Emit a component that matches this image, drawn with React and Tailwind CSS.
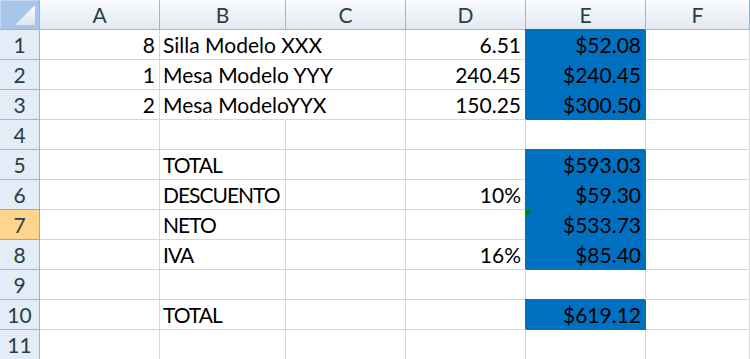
import React from "react";

const cols = ["A", "B", "C", "D", "E", "F"];

const rows = [
  { a: "8", b: "Silla Modelo XXX", d: "6.51", e: "$52.08", fill: true, spill: true },
  { a: "1", b: "Mesa Modelo YYY", d: "240.45", e: "$240.45", fill: true, spill: true },
  { a: "2", b: "Mesa ModeloYYX", d: "150.25", e: "$300.50", fill: true, spill: true },
  {},
  { b: "TOTAL", e: "$593.03", fill: true, caps: true },
  { b: "DESCUENTO", d: "10%", e: "$59.30", fill: true, caps: true },
  { b: "NETO", e: "$533.73", fill: true, flag: true, active: true, caps: true },
  { b: "IVA", d: "16%", e: "$85.40", fill: true, caps: true },
  {},
  { b: "TOTAL", e: "$619.12", fill: true, caps: true },
  {},
];

const cell = "h-[30px] border-r border-b border-[#d0d7e5] flex items-center text-black whitespace-nowrap";

function Corner() {
  return (
    <div className="h-[30px] bg-[#a9c4e9] border-r border-b border-[#9eb6ce] shadow-[inset_1px_1px_0_#c6d8f0]">
      <svg width="39" height="29" viewBox="0 0 39 29">
        <defs>
          <linearGradient id="tri" x1="0" y1="0" x2="0" y2="1">
            <stop offset="0" stopColor="#fbfcfd" />
            <stop offset="1" stopColor="#dee5ee" />
          </linearGradient>
        </defs>
        <polygon points="35,5 35,25 15,25" fill="url(#tri)" />
      </svg>
    </div>
  );
}

export default function App() {
  return (
    <div
      className="w-[750px] h-[359px] overflow-hidden bg-white text-[21px]"
      style={{ fontFamily: "Lato, 'Liberation Sans', sans-serif" }}
    >
      <div className="grid grid-cols-[40px_120px_126px_120px_120px_120px_1fr]">
        <Corner />
        {cols.map((c) => (
          <div
            key={c}
            className="h-[30px] flex items-center justify-center border-r border-b border-[#9eb6ce] bg-gradient-to-b from-[#f9fbfd] to-[#e3e9f1] text-[#27413e]"
          >
            {c}
          </div>
        ))}

        {rows.map((r, i) => (
          <React.Fragment key={i}>
            <div
              className={
                r.active
                  ? "h-[30px] flex items-center justify-center bg-[#ffd58d] border-r border-b border-[#f29436] shadow-[0_-1px_0_#f29436] text-[#27413e]"
                  : "h-[30px] flex items-center justify-center bg-[#e4ecf7] border-r border-b border-[#9eb6ce] text-[#27413e]"
              }
            >
              {i + 1}
            </div>
            <div className={cell + " justify-end pr-[4px]"}>{r.a}</div>
            <div
              className={
                cell +
                " pl-[3px] overflow-visible" +
                (r.spill ? " border-r-transparent" : "") +
                (r.caps ? " tracking-[-1px]" : "")
              }
            >
              {r.b}
            </div>
            <div className={cell}></div>
            <div className={cell + " justify-end pr-[4px]"}>{r.d}</div>
            <div
              className={
                r.fill
                  ? "relative h-[30px] border-r border-b border-[#0070c0] bg-[#0070c0] shadow-[-1px_-1px_0_#0070c0] flex items-center justify-end pr-[4px] text-black"
                  : cell + " justify-end pr-[4px]"
              }
            >
              {r.flag && (
                <span className="absolute top-0 left-0 w-0 h-0 border-t-[6px] border-r-[6px] border-t-[#008000] border-r-transparent" />
              )}
              {r.e}
            </div>
            <div className={cell}></div>
          </React.Fragment>
        ))}
      </div>
    </div>
  );
}
